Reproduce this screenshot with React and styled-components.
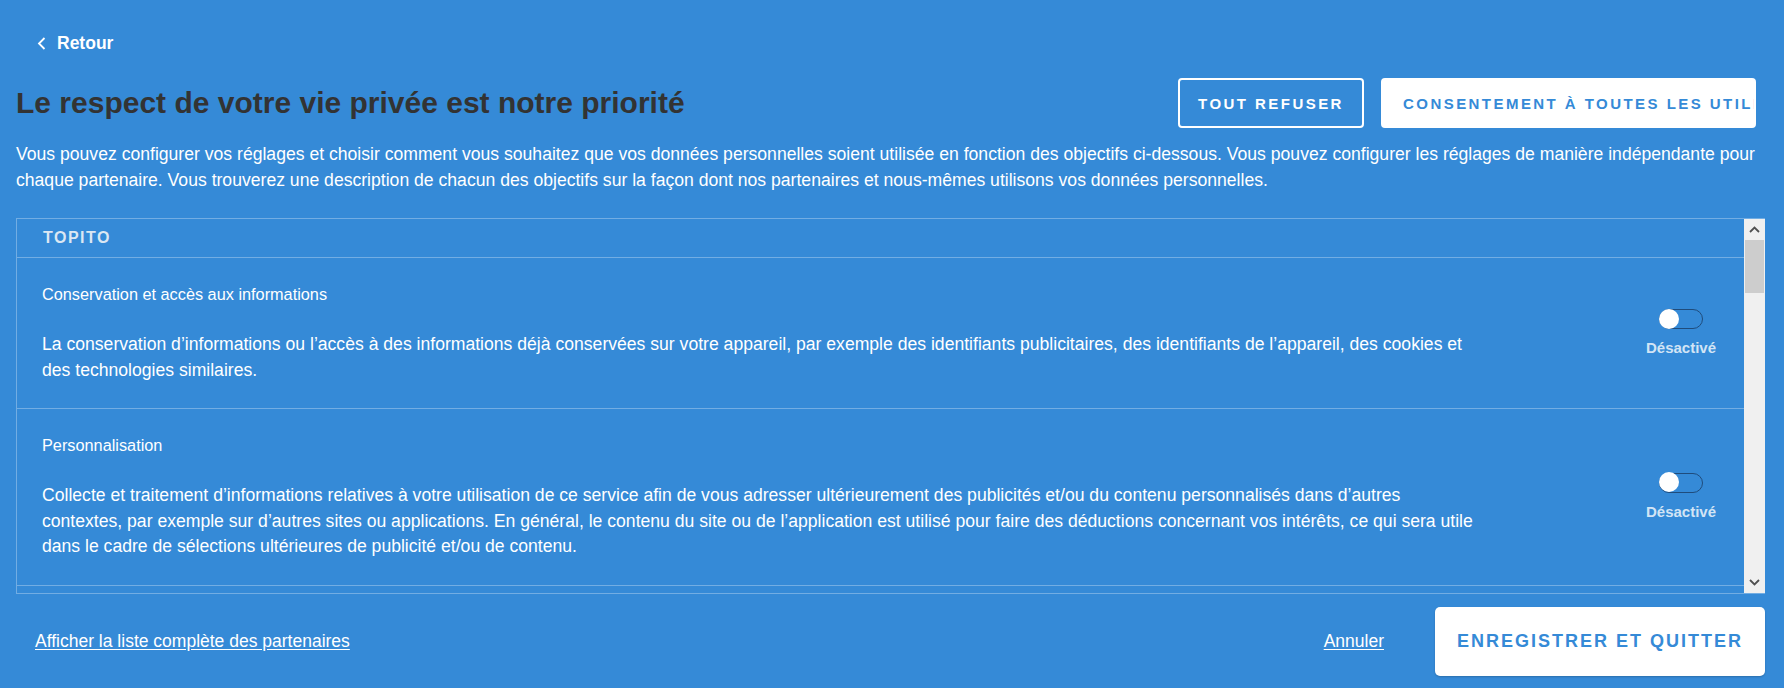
import styled, { createGlobalStyle } from "styled-components";

const GlobalStyle = createGlobalStyle`
  html, body {
    margin: 0;
    padding: 0;
    background: #358ad7;
  }
  body {
    font-family: "Liberation Sans", Arial, sans-serif;
  }
`;

const Page = styled.div`
  width: 1784px;
  height: 688px;
  box-sizing: border-box;
  padding: 31px 19px 0 16px;
  background: #358ad7;
  color: #fff;
  display: flex;
  flex-direction: column;
  overflow: hidden;
`;

const BackLink = styled.a`
  display: flex;
  align-items: center;
  gap: 11px;
  height: 24px;
  padding-left: 21px;
  font-size: 17.5px;
  font-weight: 700;
  color: #fff;
  text-decoration: none;
  cursor: pointer;
`;

const TitleRow = styled.div`
  margin-top: 23px;
  height: 50px;
  display: flex;
  align-items: center;
  justify-content: space-between;
`;

const Title = styled.h1`
  margin: 0;
  font-size: 30px;
  line-height: 36px;
  font-weight: 700;
  color: #333;
`;

const Actions = styled.div`
  display: flex;
  gap: 17px;
  margin-right: 9px;
`;

const HeadButton = styled.button`
  height: 50px;
  box-sizing: border-box;
  border-radius: 4px;
  font-family: inherit;
  font-size: 15px;
  font-weight: 700;
  letter-spacing: 2.45px;
  white-space: nowrap;
  cursor: pointer;
  border: 2px solid #fff;
  background: ${(p) => (p.$filled ? "#fff" : "transparent")};
  color: ${(p) => (p.$filled ? "#358ad7" : "#fff")};
  padding: ${(p) => (p.$filled ? "0 20px" : "0 17px")};
  width: ${(p) => (p.$filled ? "375px" : "186px")};
  overflow: hidden;
  text-align: ${(p) => (p.$filled ? "left" : "center")};
`;

const Intro = styled.p`
  margin: 13px 0 0;
  font-size: 17.6px;
  line-height: 26px;
`;

const Card = styled.div`
  margin-top: 25px;
  height: 376px;
  box-sizing: border-box;
  display: flex;
  border: 1px solid rgba(255, 255, 255, 0.3);
  border-right: none;
`;

const Scroller = styled.div`
  flex: 1;
  overflow: hidden;
`;

const CardHeader = styled.div`
  height: 38px;
  display: flex;
  align-items: center;
  padding-left: 26px;
  border-bottom: 1px solid rgba(255, 255, 255, 0.3);
  font-size: 16px;
  font-weight: 700;
  letter-spacing: 1.5px;
  color: #dbe7f3;
`;

const Purpose = styled.div`
  display: flex;
  align-items: center;
  border-bottom: 1px solid rgba(255, 255, 255, 0.3);
`;

const PurposeText = styled.div`
  flex: 1;
  padding: 26px 140px 25px 25px;
`;

const PurposeName = styled.div`
  font-size: 16.3px;
  line-height: 20px;
  margin-bottom: 28px;
`;

const PurposeDesc = styled.p`
  margin: 0;
  font-size: 17.6px;
  line-height: 25.5px;
`;

const SwitchCol = styled.div`
  width: 126px;
  display: flex;
  flex-direction: column;
  align-items: center;
  gap: 10px;
`;

const SwitchTrack = styled.button`
  position: relative;
  width: 44px;
  height: 20px;
  padding: 0;
  box-sizing: border-box;
  border: 1.5px solid #1f4c7c;
  border-radius: 10px;
  background: transparent;
  cursor: pointer;
  &::after {
    content: "";
    position: absolute;
    left: -1.5px;
    top: -1.5px;
    width: 20px;
    height: 20px;
    border-radius: 50%;
    background: #fff;
  }
`;

const SwitchLabel = styled.span`
  font-size: 15px;
  line-height: 18px;
  font-weight: 700;
  color: #d2e4f5;
`;

const ScrollBar = styled.div`
  width: 21px;
  background: #f0f0f0;
  display: flex;
  flex-direction: column;
`;

const ScrollArrow = styled.div`
  height: 21px;
  display: flex;
  align-items: center;
  justify-content: center;
`;

const ScrollTrack = styled.div`
  flex: 1;
  padding: 0 1px;
`;

const ScrollThumb = styled.div`
  height: 53px;
  background: #cdcdcd;
`;

const Footer = styled.div`
  margin-top: 13px;
  display: flex;
  align-items: center;
`;

const TextLink = styled.a`
  font-size: 17.5px;
  color: #fff;
  text-decoration: underline;
  text-underline-offset: 2px;
  cursor: pointer;
`;

const PartnersLink = styled(TextLink)`
  margin-left: 19px;
  margin-right: auto;
`;

const CancelLink = styled(TextLink)`
  margin-right: 51px;
`;

const SaveButton = styled.button`
  width: 330px;
  height: 69px;
  border: none;
  border-radius: 5px;
  background: #fff;
  box-shadow: 0 1px 2px rgba(0, 0, 0, 0.2);
  color: #358ad7;
  font-family: inherit;
  font-size: 18px;
  font-weight: 700;
  letter-spacing: 2px;
  cursor: pointer;
`;

const Arrow = ({ up }) => (
  <svg width="11" height="7" viewBox="0 0 11 7">
    <polyline
      points={up ? "1,6 5.5,1.5 10,6" : "1,1 5.5,5.5 10,1"}
      fill="none"
      stroke="#505050"
      strokeWidth="1.8"
    />
  </svg>
);

const purposes = [
  {
    name: "Conservation et accès aux informations",
    desc: "La conservation d’informations ou l’accès à des informations déjà conservées sur votre appareil, par exemple des identifiants publicitaires, des identifiants de l’appareil, des cookies et des technologies similaires.",
  },
  {
    name: "Personnalisation",
    desc: "Collecte et traitement d’informations relatives à votre utilisation de ce service afin de vous adresser ultérieurement des publicités et/ou du contenu personnalisés dans d’autres contextes, par exemple sur d’autres sites ou applications. En général, le contenu du site ou de l’application est utilisé pour faire des déductions concernant vos intérêts, ce qui sera utile dans le cadre de sélections ultérieures de publicité et/ou de contenu.",
  },
  {
    name: "Sélection, diffusion et signalement de publicités",
    desc: "Collecte d’informations, et combinaison avec des informations collectées précédemment, afin de sélectionner et diffuser des publicités à votre attention et évaluer leur diffusion ainsi que leur efficacité.",
  },
];

export default function App() {
  return (
    <>
      <GlobalStyle />
      <Page>
        <BackLink>
          <svg width="9" height="13" viewBox="0 0 9 13">
            <polyline points="7.5,1 2,6.5 7.5,12" fill="none" stroke="#fff" strokeWidth="1.8" />
          </svg>
          Retour
        </BackLink>

        <TitleRow>
          <Title>Le respect de votre vie privée est notre priorité</Title>
          <Actions>
            <HeadButton>TOUT REFUSER</HeadButton>
            <HeadButton $filled>CONSENTEMENT À TOUTES LES UTILISATIONS</HeadButton>
          </Actions>
        </TitleRow>

        <Intro>
          Vous pouvez configurer vos réglages et choisir comment vous souhaitez que vos données personnelles soient
          utilisée en fonction des objectifs ci-dessous. Vous pouvez configurer les réglages de manière indépendante
          pour chaque partenaire. Vous trouverez une description de chacun des objectifs sur la façon dont nos
          partenaires et nous-mêmes utilisons vos données personnelles.
        </Intro>

        <Card>
          <Scroller>
            <CardHeader>TOPITO</CardHeader>
            {purposes.map((p) => (
              <Purpose key={p.name}>
                <PurposeText>
                  <PurposeName>{p.name}</PurposeName>
                  <PurposeDesc>{p.desc}</PurposeDesc>
                </PurposeText>
                <SwitchCol>
                  <SwitchTrack role="switch" aria-checked="false" aria-label={p.name} />
                  <SwitchLabel>Désactivé</SwitchLabel>
                </SwitchCol>
              </Purpose>
            ))}
          </Scroller>
          <ScrollBar>
            <ScrollArrow>
              <Arrow up />
            </ScrollArrow>
            <ScrollTrack>
              <ScrollThumb />
            </ScrollTrack>
            <ScrollArrow>
              <Arrow />
            </ScrollArrow>
          </ScrollBar>
        </Card>

        <Footer>
          <PartnersLink>Afficher la liste complète des partenaires</PartnersLink>
          <CancelLink>Annuler</CancelLink>
          <SaveButton>ENREGISTRER ET QUITTER</SaveButton>
        </Footer>
      </Page>
    </>
  );
}
